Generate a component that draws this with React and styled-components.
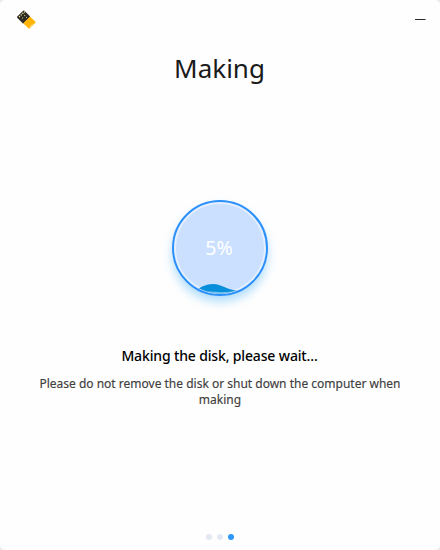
import React from 'react';
import styled, { createGlobalStyle } from 'styled-components';

const GlobalStyle = createGlobalStyle`
  * { box-sizing: border-box; }
  body { margin: 0; background: #ebebeb; }
`;

const Window = styled.main`
  display: flex;
  flex-direction: column;
  align-items: center;
  width: 440px;
  height: 550px;
  overflow: hidden;
  border-radius: 5px;
  background: #fefefe;
  font-family: "Noto Sans", sans-serif;
`;

const TitleBar = styled.header`
  display: flex;
  justify-content: space-between;
  flex: none;
  width: 100%;
  height: 40px;
  padding: 8px 8px 8px 14px;
`;

const AppLogo = styled.svg`
  width: 24px;
  height: 24px;
`;

const MinimizeButton = styled.button`
  display: flex;
  align-items: center;
  justify-content: flex-end;
  width: 24px;
  height: 24px;
  padding: 0 6px 0 0;
  border: 0;
  background: none;
`;

const Title = styled.h1`
  height: 36px;
  margin: 10px 1px 0 0;
  color: #1a1a1a;
  font-size: 26px;
  font-weight: 400;
  line-height: 36px;
`;

const WaterProgress = styled.div`
  display: grid;
  flex: none;
  width: 96px;
  height: 96px;
  margin-top: 114px;
  border-radius: 50%;
  box-shadow: 0 6px 10px rgba(44, 167, 248, 0.36);

  > * { grid-area: 1 / 1; }
`;

const Water = styled.svg`
  width: 96px;
  height: 96px;
`;

const Percentage = styled.span`
  place-self: center;
  margin-right: 2px;
  color: #fff;
  font-size: 19.5px;
  line-height: 26px;
`;

const Status = styled.h2`
  height: 20px;
  margin: 50px 1px 0 0;
  color: #000;
  font-size: 14px;
  font-weight: 500;
  line-height: 20px;
  letter-spacing: -0.15px;
`;

const Hint = styled.p`
  width: 380px;
  margin: 10px 0 0;
  color: #404040;
  font-size: 12px;
  font-weight: 400;
  line-height: 16px;
  text-align: center;
  -webkit-text-stroke: 0.15px #404040;
`;

const Steps = styled.footer`
  display: flex;
  gap: 5px;
  margin: auto 0 10px;
`;

const StepDot = styled.span`
  width: 6px;
  height: 6px;
  border-radius: 50%;
  background: ${({ $active }) => ($active ? '#2b99f9' : '#e3e9f2')};
`;

function Logo() {
  return (
    <AppLogo viewBox="14 8 24 24">
      <path d="M23.2 10.8Q24 10.2 24.7 10.9L30.2 16.5L23.2 23.7L17.2 17.8Q16.6 17.1 17.3 16.5Z" fill="#2c2a25" />
      <path d="M30 16.5L35.4 21.8Q36 22.5 35.4 23.1L29.6 28.4Q29 28.9 28.3 28.2L23.2 23.3L26.5 20Z" fill="#ffb405" />
      <path d="M29.8 27.4L34.4 23" stroke="#fff0c9" strokeWidth="1.1" strokeDasharray="1.1 .9" />
      <path d="M19 16.1L20 17M20.7 14.5L21.7 15.4M22.4 12.9L23.4 13.8M24 11.6L25 12.5M22.3 17.7L22.9 18.2M24.5 15.3L25.1 15.8M26.2 17.1L26.8 17.6" stroke="#f4ea9c" strokeWidth="1.15" />
    </AppLogo>
  );
}

export default function App() {
  return (
    <>
      <GlobalStyle />
      <Window>
        <TitleBar>
          <Logo />
          <MinimizeButton aria-label="Minimize">
            <svg width="11" height="2"><path d="M0 .5H10.6" stroke="#2c2c2c" /></svg>
          </MinimizeButton>
        </TitleBar>
        <Title>Making</Title>
        <WaterProgress>
          <Water viewBox="0 0 96 96">
            <defs>
              <clipPath id="bowl"><circle cx="48" cy="48" r="45.5" /></clipPath>
            </defs>
            <circle cx="48" cy="48" r="48" fill="#e3effe" />
            <circle cx="48" cy="48" r="44" fill="#cbdfff" />
            <g clipPath="url(#bowl)">
              <path d="M20 96V93Q31 84 41 84C50 84 54 89.8 66 90.8V96Z" fill="#088fdb" />
              <path d="M20 96V90.5Q34 91 46 92.1Q57 92.4 65 90.8L76 90V96Z" fill="#79c4ee" />
            </g>
            <circle cx="48" cy="48" r="47" fill="none" stroke="#2c90fb" strokeWidth="2" />
          </Water>
          <Percentage>5%</Percentage>
        </WaterProgress>
        <Status>Making the disk, please wait...</Status>
        <Hint>Please do not remove the disk or shut down the computer when making</Hint>
        <Steps>
          <StepDot />
          <StepDot />
          <StepDot $active />
        </Steps>
      </Window>
    </>
  );
}
